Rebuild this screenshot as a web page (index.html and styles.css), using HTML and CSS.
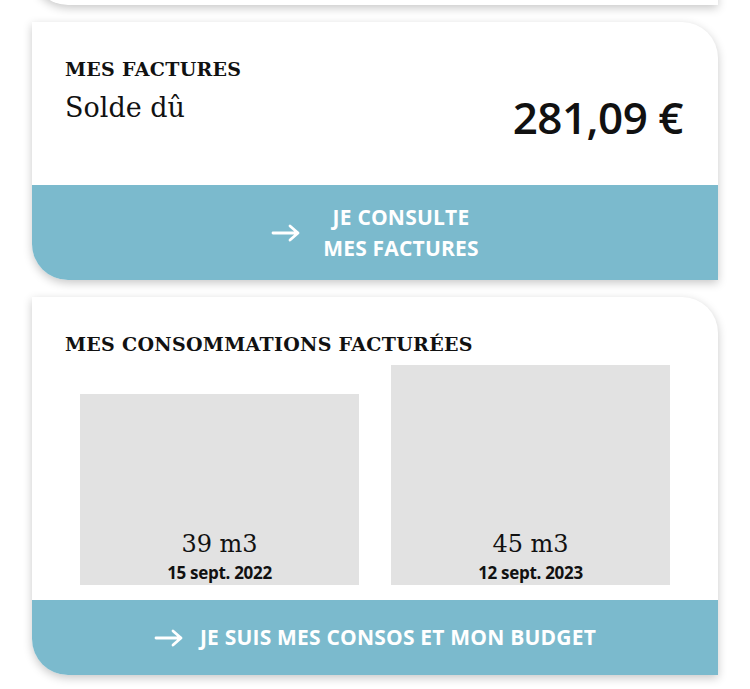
FILE: index.html
```html
<!doctype html>
<html lang="fr">
<head>
<meta charset="utf-8">
<meta name="viewport" content="width=device-width, initial-scale=1.0">
<link rel="stylesheet" href="styles.css">
<title>Mon espace client</title>
</head>
<body>
<div class="stack">

<div class="card card-cut"></div>

<section class="card">
    <div class="card-body">
        <h2 class="card-title">MES FACTURES</h2>
        <div class="balance">
            <p class="balance-label">Solde dû</p>
            <p class="balance-amount">281,09 €</p>
        </div>
    </div>
    <a class="card-action card-action-tall" href="#">
        <svg class="arrow" width="30" height="18" viewBox="0 0 30 18"><path d="M2 9h25M19 2l8 7-8 7" fill="none" stroke="#fff" stroke-width="2.8" stroke-linecap="round" stroke-linejoin="round"/></svg>
        <span class="action-text">JE CONSULTE<br>MES FACTURES</span>
    </a>
</section>

<section class="card">
    <div class="card-body card-body-chart">
        <h2 class="card-title">MES CONSOMMATIONS FACTURÉES</h2>
        <div class="bars">
            <div class="bar" style="height: 191px">
                <span class="bar-value">39 m3</span>
                <span class="bar-date">15 sept. 2022</span>
            </div>
            <div class="bar" style="height: 220px">
                <span class="bar-value">45 m3</span>
                <span class="bar-date">12 sept. 2023</span>
            </div>
        </div>
    </div>
    <a class="card-action" href="#">
        <svg class="arrow" width="30" height="18" viewBox="0 0 30 18"><path d="M2 9h25M19 2l8 7-8 7" fill="none" stroke="#fff" stroke-width="2.8" stroke-linecap="round" stroke-linejoin="round"/></svg>
        <span class="action-text">JE SUIS MES CONSOS ET MON BUDGET</span>
    </a>
</section>

</div>
</body>
</html>
```

FILE: styles.css
```css
h2,
p {
    margin: 0;
    padding: 0;
}
body {
    margin: 0;
    background-color: white;
    color: #111;
    font-family: "Open Sans", "Liberation Sans", sans-serif;
}
.stack {
    display: flex;
    flex-direction: column;
    gap: 17px;
    padding: 0 32px 20px 32px;
}
.card {
    background: white;
    border-radius: 0 36px 0 36px;
    box-shadow: 0 3px 10px rgba(0, 0, 0, 0.22);
    overflow: hidden;
}
.card-cut {
    height: 40px;
    margin-top: -35px;
}
.card-body {
    padding: 37px 35px 0 33px;
    height: 126px;
}
.card-body-chart {
    height: auto;
    padding: 37px 48px 15px 33px;
}
.card-title {
    font-family: "DejaVu Serif", serif;
    font-weight: bold;
    font-size: 19px;
    line-height: 20px;
    letter-spacing: 0.3px;
    color: #111;
}
.balance {
    display: flex;
    justify-content: space-between;
    align-items: flex-start;
    margin-top: 10px;
}
.balance-label {
    font-family: "DejaVu Serif", serif;
    font-size: 27px;
    line-height: 30px;
    margin-top: 4px;
}
.balance-amount {
    font-weight: 600;
    font-size: 44px;
    line-height: 50px;
    letter-spacing: -0.5px;
    margin-top: 3px;
}
.bars {
    display: flex;
    align-items: flex-end;
    gap: 32px;
    margin: 11px 0 0 15px;
    height: 220px;
}
.bar {
    flex: 1;
    background: #e2e2e2;
    display: flex;
    flex-direction: column;
    justify-content: flex-end;
    align-items: center;
    padding-bottom: 2px;
    box-sizing: border-box;
}
.bar-value {
    font-family: "DejaVu Serif", serif;
    font-size: 24px;
    line-height: 28px;
    margin-bottom: 5px;
}
.bar-date {
    font-weight: 700;
    font-size: 17px;
    line-height: 20px;
    letter-spacing: -0.3px;
}
.card-action {
    display: flex;
    align-items: center;
    justify-content: center;
    gap: 16px;
    height: 75px;
    background: #7bbacd;
    color: white;
    text-decoration: none;
}
.card-action-tall {
    height: 95px;
    gap: 22px;
}
.action-text {
    font-weight: 700;
    font-size: 21px;
    line-height: 31px;
    text-align: center;
    letter-spacing: 0.2px;
}
.arrow {
    flex: none;
}
```
